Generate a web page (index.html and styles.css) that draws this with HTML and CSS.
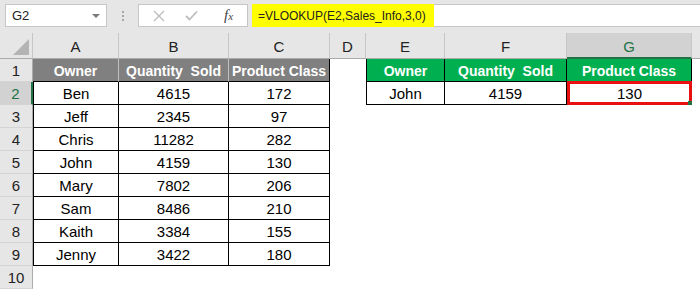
FILE: index.html
```html
<!DOCTYPE html>
<html lang="en">
<head>
    <meta charset="UTF-8">
    <title>VLOOKUP - Sales_Info</title>
    <link rel="stylesheet" href="styles.css">
</head>
<body>
    <div class="formula-bar">
        <div class="name-box">
            <span>G2</span>
            <span class="caret"></span>
        </div>
        <div class="grip"><i></i><i></i><i></i></div>
        <div class="fx-buttons">
            <svg width="12" height="12" viewBox="0 0 12 12"><path d="M1 1L11 11M11 1L1 11" stroke="#bdbdbd" stroke-width="1.4" fill="none"/></svg>
            <svg width="13" height="11" viewBox="0 0 13 11"><path d="M1 6L4.5 9.5L12 1.5" stroke="#bdbdbd" stroke-width="1.8" fill="none"/></svg>
            <span class="fx">f<sub>x</sub></span>
        </div>
        <div class="formula">
            <span class="formula-text">=VLOOKUP(E2,Sales_Info,3,0)</span>
        </div>
    </div>

    <div class="sheet">
        <div class="corner"></div>
        <div class="ch">A</div>
        <div class="ch">B</div>
        <div class="ch">C</div>
        <div class="ch">D</div>
        <div class="ch">E</div>
        <div class="ch">F</div>
        <div class="ch sel">G</div>
        <div class="ch end"></div>

        <!-- row 1 -->
        <div class="rh">1</div>
        <div class="hd gray">Owner</div>
        <div class="hd gray">Quantity&nbsp; Sold</div>
        <div class="hd gray last">Product Class</div>
        <div class="c"></div>
        <div class="hd green first">Owner</div>
        <div class="hd green">Quantity&nbsp; Sold</div>
        <div class="hd green">Product Class</div>
        <div class="c"></div>

        <!-- row 2 -->
        <div class="rh sel">2</div>
        <div class="c t first">Ben</div>
        <div class="c t">4615</div>
        <div class="c t">172</div>
        <div class="c"></div>
        <div class="c t first">John</div>
        <div class="c t">4159</div>
        <div class="c t active">130</div>
        <div class="c"></div>

        <div class="rh">3</div>
        <div class="c t first">Jeff</div>
        <div class="c t">2345</div>
        <div class="c t">97</div>
        <div class="c blank"></div>

        <div class="rh">4</div>
        <div class="c t first">Chris</div>
        <div class="c t">11282</div>
        <div class="c t">282</div>
        <div class="c blank"></div>

        <div class="rh">5</div>
        <div class="c t first">John</div>
        <div class="c t">4159</div>
        <div class="c t">130</div>
        <div class="c blank"></div>

        <div class="rh">6</div>
        <div class="c t first">Mary</div>
        <div class="c t">7802</div>
        <div class="c t">206</div>
        <div class="c blank"></div>

        <div class="rh">7</div>
        <div class="c t first">Sam</div>
        <div class="c t">8486</div>
        <div class="c t">210</div>
        <div class="c blank"></div>

        <div class="rh">8</div>
        <div class="c t first">Kaith</div>
        <div class="c t">3384</div>
        <div class="c t">155</div>
        <div class="c blank"></div>

        <div class="rh">9</div>
        <div class="c t first">Jenny</div>
        <div class="c t">3422</div>
        <div class="c t">180</div>
        <div class="c blank"></div>

        <div class="rh">10</div>
        <div class="c row-rest"></div>
    </div>
</body>
</html>
```

FILE: styles.css
```css
* {
    margin: 0;
    padding: 0;
    box-sizing: border-box;
}

body {
    width: 700px;
    height: 289px;
    overflow: hidden;
    background: #fff;
    font-family: 'Liberation Sans', Arial, sans-serif;
    color: #000;
}

/* formula bar */
.formula-bar {
    height: 33px;
    background: #e6e6e6;
    display: flex;
    align-items: flex-start;
    padding: 4px 0 0 5px;
}

.name-box {
    width: 102px;
    height: 23px;
    background: #fff;
    border: 1px solid #c6c6c6;
    display: flex;
    align-items: center;
    justify-content: space-between;
    padding: 0 6px 0 6px;
    font-size: 13px;
    color: #222;
}

.caret {
    width: 0;
    height: 0;
    border-left: 4px solid transparent;
    border-right: 4px solid transparent;
    border-top: 4px solid #7a7a7a;
}

.grip {
    width: 31px;
    height: 23px;
    display: flex;
    flex-direction: column;
    align-items: center;
    justify-content: center;
    gap: 2px;
}

.grip i {
    width: 2px;
    height: 2px;
    background: #a6a6a6;
}

.fx-buttons {
    width: 110px;
    height: 23px;
    background: #fff;
    border: 1px solid #c6c6c6;
    display: flex;
    align-items: center;
    padding: 0 0 0 14px;
    gap: 20px;
}

.fx {
    font-family: 'Liberation Serif', serif;
    font-style: italic;
    font-size: 15px;
    color: #444;
    margin-left: 6px;
}

.fx sub {
    font-size: 11px;
    vertical-align: 0;
}

.formula {
    margin-left: 4px;
    flex: 1;
    height: 23px;
    background: #fff;
    border: 1px solid #c6c6c6;
    border-right: none;
    display: flex;
}

.formula-text {
    background: #ffff00;
    width: 182px;
    height: 23px;
    display: flex;
    align-items: center;
    padding-left: 6px;
    font-size: 12px;
    color: #222;
    margin: -1px 0 0 -1px;
}

/* grid */
.sheet {
    display: grid;
    grid-template-columns: 33px 86px 110px 101px 36px 79px 122px 125px 8px;
    grid-template-rows: 26px repeat(10, 23px);
}

.corner {
    background: #e6e6e6;
    border-right: 1px solid #c6c6c6;
    border-bottom: 1px solid #ababab;
    position: relative;
}

.corner::after {
    content: "";
    position: absolute;
    right: 3px;
    bottom: 3px;
    border-left: 16px solid transparent;
    border-bottom: 16px solid #b4b4b4;
}

.ch {
    background: #e6e6e6;
    border-right: 1px solid #c6c6c6;
    border-bottom: 1px solid #ababab;
    display: flex;
    align-items: center;
    justify-content: center;
    font-size: 15px;
    color: #222;
    padding-top: 2px;
}

.ch.sel {
    background: #d2d2d2;
    color: #217346;
    border-bottom: 2px solid #217346;
}

.ch.end {
    border-right: none;
}

.rh {
    background: #e6e6e6;
    border-right: 1px solid #ababab;
    border-bottom: 1px solid #d4d4d4;
    display: flex;
    align-items: center;
    justify-content: center;
    font-size: 15px;
    color: #222;
}

.rh.sel {
    background: #d2d2d2;
    color: #217346;
    border-right: 2px solid #217346;
}

.c {
    font-size: 15px;
}

.blank {
    grid-column: 5 / 10;
}

.row-rest {
    grid-column: 2 / 10;
}

.t {
    border-right: 1px solid #000;
    border-bottom: 1px solid #000;
    display: flex;
    align-items: center;
    justify-content: center;
    padding-top: 1px;
}

.t.first {
    border-left: 1px solid #000;
}

.hd {
    color: #fff;
    font-weight: bold;
    font-size: 14px;
    display: flex;
    align-items: center;
    justify-content: center;
    border-bottom: 1px solid #000;
    border-right: 1px solid #bfbfbf;
    padding-top: 1px;
}

.gray {
    background: #808080;
}

.gray.last {
    border-right: 1px solid #000;
}

.green {
    background: #00b050;
    border-right: 1px solid #000;
}

.green.first {
    border-left: 1px solid #000;
}

.active {
    border: 3px solid #e81010;
    margin-top: -1px;
    position: relative;
}

.active::after {
    content: "";
    position: absolute;
    right: -3px;
    bottom: -3px;
    width: 4px;
    height: 4px;
    background: #217346;
}
```
